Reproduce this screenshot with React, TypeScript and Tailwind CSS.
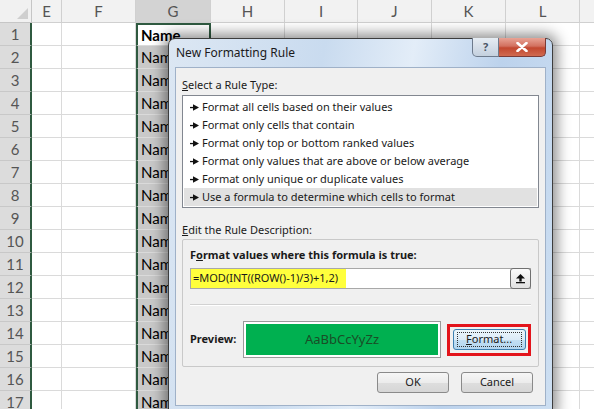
import React from "react";

const cols = [
  { name: "E", w: 30 },
  { name: "F", w: 74 },
  { name: "G", w: 75 },
  { name: "H", w: 74 },
  { name: "I", w: 73 },
  { name: "J", w: 74 },
  { name: "K", w: 74 },
  { name: "L", w: 74 },
  { name: "", w: 60 },
];

const rules = [
  "Format all cells based on their values",
  "Format only cells that contain",
  "Format only top or bottom ranked values",
  "Format only values that are above or below average",
  "Format only unique or duplicate values",
  "Use a formula to determine which cells to format",
];

// small "dash + triangle" bullet used in the rule list
function Bullet() {
  return (
    <svg width="9" height="7" viewBox="0 0 9 7" className="shrink-0">
      <rect x="0" y="2.9" width="4" height="1.3" fill="#111" />
      <polygon points="3,0.3 9,3.5 3,6.7" fill="#111" />
    </svg>
  );
}

function Sheet() {
  const rows = Array.from({ length: 17 }, (_, i) => i + 1);
  return (
    <div className="flex flex-col bg-white font-['Lato','Liberation_Sans',sans-serif]">
      {/* column header row */}
      <div className="flex h-[23px] shrink-0">
        <div className="relative w-[32px] shrink-0 border-b border-r border-[#c6c6c6] bg-[#f1f1f1]">
          <div className="absolute bottom-[3px] right-[3px] h-0 w-0 border-b-[11px] border-l-[11px] border-b-[#cfcfcf] border-l-transparent" />
        </div>
        {cols.map((c) => (
          <div
            key={c.name + c.w}
            style={{ width: c.w }}
            className={`flex shrink-0 items-center justify-center border-b border-r border-[#d0d0d0] text-[15px] text-[#555] ${
              c.name === "G" ? "bg-[#d3d3d3]" : "bg-[#f2f2f2]"
            }`}
          >
            {c.name}
          </div>
        ))}
      </div>
      {rows.map((r) => (
        <div key={r} className="flex h-[23px] shrink-0">
          <div className="flex w-[32px] shrink-0 items-center justify-center border-b border-r-2 border-b-[#c8c8c8] border-r-[#2f5a40] bg-[#dcdcdc] text-[15px] text-[#555]">
            {r}
          </div>
          {cols.map((c) => {
            const isG = c.name === "G";
            return (
              <div
                key={c.name + c.w}
                style={{ width: c.w }}
                className={`flex shrink-0 items-center overflow-hidden border-b border-r border-[#dadada] ${
                  isG
                    ? `border-l-2 border-l-[#2f5a40] border-r-2 border-r-[#2f5a40] pl-[3px] text-[15px] text-black ${
                        r === 1 ? "border-t-2 border-t-[#2f5a40] bg-white font-bold" : "bg-[#c9c9c9]"
                      }`
                    : ""
                }`}
              >
                {isG ? "Name" : null}
              </div>
            );
          })}
        </div>
      ))}
    </div>
  );
}

function WinButton({ children, primary }: { children: React.ReactNode; primary?: boolean }) {
  return (
    <button
      className={`flex h-[21px] items-center justify-center rounded-[3px] border text-[11px] text-[#1a1a1a] ${
        primary
          ? "w-[73px] border-[#3c7fb1] bg-[linear-gradient(#ecf6fc_0%,#dcebf7_50%,#c3dff3_51%,#b3d6f0_100%)]"
          : "w-[72px] border-[#8a8a8a] bg-[linear-gradient(#f6f6f6_0%,#ececec_50%,#dedede_51%,#d6d6d6_100%)]"
      }`}
    >
      {primary ? (
        <span className="flex h-[15px] w-[65px] items-center justify-center border border-dotted border-[#333]">
          {children}
        </span>
      ) : (
        children
      )}
    </button>
  );
}

function Dialog() {
  return (
    <div className="absolute left-[168px] top-[38px] flex h-[375px] w-[385px] flex-col rounded-t-[7px] border border-[#3d3d3d] bg-[linear-gradient(100deg,#dce7f3_0%,#c9dbef_35%,#e3edf8_55%,#bcd2ec_75%,#cddff2_100%)] px-[6px] pb-[6px] shadow-[0_0_14px_4px_rgba(0,0,0,0.45)] font-['Noto_Sans','Liberation_Sans',sans-serif]">
      {/* title bar */}
      <div className="relative flex h-[28px] shrink-0 items-center pl-[1px] text-[12px] text-[#1b1b1b]">
        New Formatting Rule
        <div className="absolute right-0 top-[-1px] flex">
          <div className="flex h-[19px] w-[27px] items-center justify-center rounded-bl-[5px] border border-t-0 border-[#6d7a8c] bg-[linear-gradient(#e6ecf3,#c4d0de)] text-[11px] font-bold text-[#4a5566]">
            ?
          </div>
          <div className="flex h-[19px] w-[47px] items-center justify-center rounded-br-[5px] border border-l-0 border-t-0 border-[#7a3a36] bg-[linear-gradient(#e8a395_0%,#d2705f_45%,#c2472f_55%,#d06a50_100%)]">
            <svg width="12" height="10" viewBox="0 0 12 10">
              <path d="M1.5 1 L10.5 9 M10.5 1 L1.5 9" stroke="#fff" strokeWidth="2.6" strokeLinecap="round" />
            </svg>
          </div>
        </div>
      </div>

      {/* client area */}
      <div className="flex flex-1 flex-col border border-[#9fb1c8] bg-[#f0f0f0] px-[6px] text-[11px] text-[#1a1a1a]">
        <div className="mt-[9px] h-[16px] leading-[16px]">
          <span className="underline">S</span>elect a Rule Type:
        </div>
        <div className="mt-[2px] flex h-[113px] flex-col border border-[#828790] bg-white px-[1px] pt-[2px]">
          {rules.map((t, i) => (
            <div
              key={t}
              className={`flex h-[18px] items-center gap-[3px] pl-[6px] ${i === rules.length - 1 ? "bg-[#e1e1e1]" : ""}`}
            >
              <Bullet />
              <span>{t}</span>
            </div>
          ))}
        </div>

        <div className="mt-[14px] h-[16px] leading-[16px]">
          <span className="underline">E</span>dit the Rule Description:
        </div>
        <div className="mt-[1px] flex h-[128px] flex-col rounded-[2px] border border-[#c9c9c9] px-[7px]">
          <div className="mt-[7px] h-[16px] font-bold leading-[16px]">
            F<span className="underline">o</span>rmat values where this formula is true:
          </div>
          <div className="mt-[5px] flex h-[21px] items-stretch border border-[#a8a8a8] bg-white">
            <div className="flex flex-1 items-center">
              <span className="flex h-full items-center bg-[#ffff3c] pl-[2px] pr-[8px] text-[11px]">
                =MOD(INT((ROW()-1)/3)+1,2)
              </span>
            </div>
            <div className="m-[-1px] flex w-[21px] items-center justify-center rounded-[3px] border border-[#707070] bg-[linear-gradient(#fbfbfb,#e2e2e2)]">
              <svg width="11" height="11" viewBox="0 0 11 11">
                <polygon points="5.5,1 10,5.5 1,5.5" fill="#111" />
                <rect x="4.3" y="5" width="2.4" height="3.5" fill="#111" />
                <rect x="1" y="9" width="9" height="1.3" fill="#111" />
              </svg>
            </div>
          </div>
          <div className="mt-[15px] border-t border-[#d2d2d2] border-b border-b-white" />
          <div className="mt-[15px] flex items-center">
            <div className="w-[53px] font-bold">Preview:</div>
            <div className="h-[37px] w-[199px] border border-[#9a9a9a] bg-white p-[2px]">
              <div className="flex h-full items-center justify-center bg-[#00b050] text-[13px] text-[#1a4d27]">
                AaBbCcYyZz
              </div>
            </div>
            <div className="ml-[6px] flex h-[32px] w-[84px] items-center justify-center border-[3px] border-[#e3141b]">
              <WinButton primary>
                <span>
                  <span className="underline">F</span>ormat...
                </span>
              </WinButton>
            </div>
          </div>
        </div>
        <div className="mt-[5px] flex justify-end gap-[12px] pr-[6px]">
          <WinButton>OK</WinButton>
          <WinButton>Cancel</WinButton>
        </div>
      </div>
    </div>
  );
}

export default function App() {
  return (
    <div className="relative h-[409px] w-[594px] overflow-hidden bg-white">
      <Sheet />
      <Dialog />
    </div>
  );
}
